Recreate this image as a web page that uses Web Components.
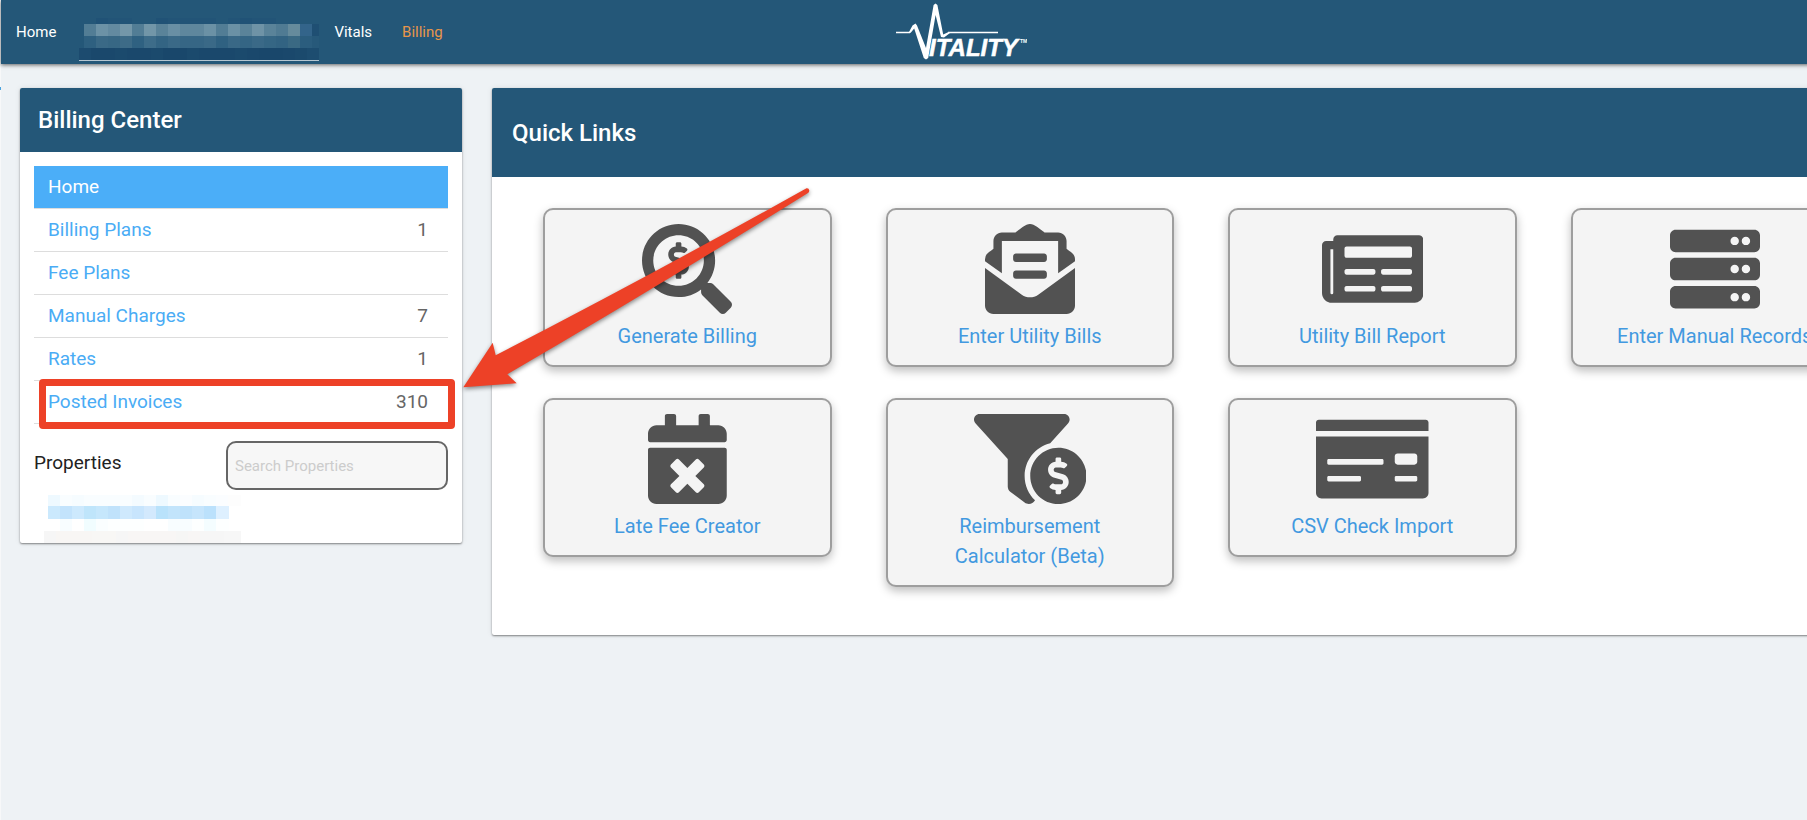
<!DOCTYPE html>
<html lang="en">
<head>
<meta charset="utf-8">
<title>Billing Center</title>
<style>
html, body {
  margin: 0;
  min-height: 100%;
}

body {
  background: #eef2f5;
  font-family: Roboto, "Liberation Sans", sans-serif;
  overflow-x: hidden;
}
</style>
</head>
<body>
<app-shell>
  <top-bar slot="header">
    <nav-link href="#home">Home</nav-link>
    <pixel-mask name="account"></pixel-mask>
    <nav-link href="#vitals">Vitals</nav-link>
    <nav-link href="#billing" active>Billing</nav-link>
  </top-bar>

  <panel-card slot="side" heading="Billing Center">
    <billing-menu>
      <menu-row href="#home" active>Home</menu-row>
      <menu-row href="#plans" count="1">Billing Plans</menu-row>
      <menu-row href="#fees">Fee Plans</menu-row>
      <menu-row href="#charges" count="7">Manual Charges</menu-row>
      <menu-row href="#rates" count="1">Rates</menu-row>
      <menu-row href="#invoices" count="310" marked>Posted Invoices</menu-row>
    </billing-menu>
    <property-search></property-search>
  </panel-card>

  <panel-card slot="main" heading="Quick Links" large>
    <link-grid>
      <quick-link href="#generate" icon="search-dollar">Generate Billing</quick-link>
      <quick-link href="#bills" icon="envelope">Enter Utility Bills</quick-link>
      <quick-link href="#report" icon="newspaper">Utility Bill Report</quick-link>
      <quick-link href="#records" icon="server">Enter Manual Records</quick-link>
      <quick-link href="#late-fee" icon="calendar">Late Fee Creator</quick-link>
      <quick-link href="#reimbursement" icon="funnel">Reimbursement Calculator (Beta)</quick-link>
      <quick-link href="#csv" icon="check">CSV Check Import</quick-link>
    </link-grid>
  </panel-card>

  <pointer-arrow slot="overlay"></pointer-arrow>
</app-shell>

<script>
// each icon is drawn on a 512 unit high box
const icons = {
  'search-dollar': {
    width: 512,
    path: 'M505.04 442.66l-99.71-99.69c-4.5-4.5-10.6-7-17-7h-16.3c27.6-35.3 44-79.69 44-127.99C416.03 93.09 322.92 0 208.02 0S0 93.09 0 207.98s93.11 207.98 208.02 207.98c48.3 0 92.71-16.4 128.01-44v16.3c0 6.4 2.5 12.5 7 17l99.71 99.69c9.4 9.4 24.6 9.4 33.9 0l28.3-28.3c9.4-9.4 9.4-24.59.1-33.99zm-297.02-90.7c-79.54 0-144-64.34-144-143.98 0-79.53 64.35-143.98 144-143.98 79.54 0 144 64.34 144 143.98 0 79.53-64.35 143.98-144 143.98zm27.11-152.54l-45.01-13.5c-5.16-1.55-8.77-6.78-8.77-12.73 0-7.27 5.3-13.19 11.8-13.19h28.11c4.56 0 8.96 1.29 12.82 3.72 3.24 2.03 7.36 1.91 10.13-.73l11.75-11.21c3.53-3.37 3.33-9.21-.57-12.14-9.1-6.83-20.08-10.77-31.37-11.35V112c0-4.42-3.58-8-8-8h-16c-4.42 0-8 3.58-8 8v16.12c-23.63.63-42.68 20.55-42.68 45.07 0 19.97 12.99 37.81 31.58 43.39l45.01 13.5c5.16 1.55 8.77 6.78 8.77 12.73 0 7.27-5.3 13.19-11.8 13.19h-28.1c-4.56 0-8.96-1.29-12.82-3.72-3.24-2.03-7.36-1.91-10.13.73l-11.75 11.21c-3.53 3.37-3.33 9.21.57 12.14 9.1 6.83 20.08 10.77 31.37 11.35V304c0 4.42 3.58 8 8 8h16c4.42 0 8-3.58 8-8v-16.12c23.63-.63 42.68-20.54 42.68-45.07 0-19.97-12.99-37.81-31.59-43.39z'
  },
  envelope: {
    width: 512,
    path: 'M176 216h160c8.84 0 16-7.16 16-16v-16c0-8.84-7.16-16-16-16H176c-8.84 0-16 7.16-16 16v16c0 8.84 7.16 16 16 16zm-16 80c0 8.84 7.16 16 16 16h160c8.84 0 16-7.16 16-16v-16c0-8.84-7.16-16-16-16H176c-8.84 0-16 7.16-16 16v16zm96 121.13c-16.42 0-32.84-5.06-46.86-15.19L0 250.86V464c0 26.51 21.49 48 48 48h416c26.51 0 48-21.49 48-48V250.86L302.86 401.94c-14.02 10.12-30.44 15.19-46.86 15.19zm237.61-254.18c-8.85-6.94-17.24-13.47-29.61-22.81V96c0-26.51-21.49-48-48-48h-77.55c-3.04-2.2-5.87-4.26-9.04-6.56C312.6 29.17 279.2-.35 256 0c-23.2-.35-56.59 29.17-73.41 41.44-3.17 2.3-6 4.36-9.04 6.56H96c-26.51 0-48 21.49-48 48v44.14c-12.37 9.33-20.76 15.87-29.61 22.81A47.995 47.995 0 0 0 0 200.72v10.65l96 69.35V96h320v184.72l96-69.35v-10.65c0-14.74-6.78-28.67-18.39-37.77z'
  },
  newspaper: {
    width: 576,
    path: 'M552 64H88c-13.255 0-24 10.745-24 24v8H24c-13.255 0-24 10.745-24 24v272c0 30.928 25.072 56 56 56h472c26.51 0 48-21.49 48-48V88c0-13.255-10.745-24-24-24zM56 400a8 8 0 0 1-8-8V144h16v248a8 8 0 0 1-8 8zm236-16H140c-6.627 0-12-5.373-12-12v-8c0-6.627 5.373-12 12-12h152c6.627 0 12 5.373 12 12v8c0 6.627-5.373 12-12 12zm208 0H348c-6.627 0-12-5.373-12-12v-8c0-6.627 5.373-12 12-12h152c6.627 0 12 5.373 12 12v8c0 6.627-5.373 12-12 12zm-208-96H140c-6.627 0-12-5.373-12-12v-8c0-6.627 5.373-12 12-12h152c6.627 0 12 5.373 12 12v8c0 6.627-5.373 12-12 12zm208 0H348c-6.627 0-12-5.373-12-12v-8c0-6.627 5.373-12 12-12h152c6.627 0 12 5.373 12 12v8c0 6.627-5.373 12-12 12zm0-96H140c-6.627 0-12-5.373-12-12v-40c0-6.627 5.373-12 12-12h360c6.627 0 12 5.373 12 12v40c0 6.627-5.373 12-12 12z'
  },
  server: {
    width: 512,
    path: [0, 160, 320].map(y => `M480 ${y + 160}H32c-17.673 0-32-14.327-32-32V${y + 64}c0-17.673 14.327-32 32-32h448c17.673 0 32 14.327 32 32v64c0 17.673-14.327 32-32 32zm-48-88c-13.255 0-24 10.745-24 24s10.745 24 24 24 24-10.745 24-24-10.745-24-24-24zm-64 0c-13.255 0-24 10.745-24 24s10.745 24 24 24 24-10.745 24-24-10.745-24-24-24z`).join('')
  },
  calendar: {
    width: 448,
    path: 'M436 160H12c-6.6 0-12-5.4-12-12v-36c0-26.5 21.5-48 48-48h48V12c0-6.6 5.4-12 12-12h40c6.6 0 12 5.4 12 12v52h128V12c0-6.6 5.4-12 12-12h40c6.6 0 12 5.4 12 12v52h48c26.5 0 48 21.5 48 48v36c0 6.6-5.4 12-12 12zM12 192h424c6.6 0 12 5.4 12 12v260c0 26.5-21.5 48-48 48H48c-26.5 0-48-21.5-48-48V204c0-6.6 5.4-12 12-12zm257.3 160l48.1-48.1c4.7-4.7 4.7-12.3 0-17l-28.3-28.3c-4.7-4.7-12.3-4.7-17 0L224 306.7l-48.1-48.1c-4.7-4.7-12.3-4.7-17 0l-28.3 28.3c-4.7 4.7-4.7 12.3 0 17l48.1 48.1-48.1 48.1c-4.7 4.7-4.7 12.3 0 17l28.3 28.3c4.7 4.7 12.3 4.7 17 0l48.1-48.1 48.1 48.1c4.7 4.7 12.3 4.7 17 0l28.3-28.3c4.7-4.7 4.7-12.3 0-17L269.3 352z'
  },
  funnel: {
    width: 640,
    path: 'M433.46 165.94l101.2-111.87C554.61 34.12 540.48 0 512.26 0H31.74C3.52 0-10.61 34.12 9.34 54.07L192 256v155.92c0 12.59 5.93 24.44 16 32l79.99 60c20.86 15.64 48.47 6.97 59.22-13.57C310.8 455.38 288 406.35 288 352c0-89.79 62.05-165.17 145.46-186.06zM480 192c-88.37 0-160 71.63-160 160s71.63 160 160 160 160-71.63 160-160-71.63-160-160-160zm16 239.88V448c0 4.42-3.58 8-8 8h-16c-4.42 0-8-3.58-8-8v-16.29c-11.29-.58-22.27-4.52-31.37-11.35-3.9-2.93-4.1-8.77-.57-12.14l11.75-11.21c2.77-2.64 6.89-2.76 10.13-.73 3.87 2.42 8.26 3.72 12.82 3.72h28.11c6.5 0 11.8-5.92 11.8-13.19 0-5.95-3.61-11.19-8.77-12.73l-45.01-13.5c-18.59-5.58-31.58-23.42-31.58-43.39 0-24.52 19.05-44.44 42.67-45.07V256c0-4.42 3.58-8 8-8h16c4.42 0 8 3.58 8 8v16.29c11.29.58 22.27 4.51 31.37 11.35 3.9 2.93 4.1 8.77.57 12.14l-11.75 11.21c-2.77 2.64-6.89 2.76-10.13.73-3.87-2.43-8.26-3.72-12.82-3.72h-28.11c-6.5 0-11.8 5.92-11.8 13.19 0 5.95 3.61 11.19 8.77 12.73l45.01 13.5c18.59 5.58 31.58 23.42 31.58 43.39 0 24.53-19.05 44.44-42.67 45.07z'
  },
  check: {
    width: 640,
    path: 'M624 32H16C7.16 32 0 39.16 0 48v48h640V48c0-8.84-7.16-16-16-16zM0 448c0 17.67 14.33 32 32 32h576c17.67 0 32-14.33 32-32V128H0v320zm448-208c0-8.84 7.16-16 16-16h96c8.84 0 16 7.16 16 16v32c0 8.84-7.16 16-16 16h-96c-8.84 0-16-7.16-16-16v-32zm0 120c0-4.42 3.58-8 8-8h112c4.42 0 8 3.58 8 8v16c0 4.42-3.58 8-8 8H456c-4.42 0-8-3.58-8-8v-16zM64 264c0-4.42 3.58-8 8-8h304c4.42 0 8 3.58 8 8v16c0 4.42-3.58 8-8 8H72c-4.42 0-8-3.58-8-8v-16zm0 96c0-4.42 3.58-8 8-8h176c4.42 0 8 3.58 8 8v16c0 4.42-3.58 8-8 8H72c-4.42 0-8-3.58-8-8v-16z'
  }
}

// rows of 12px wide blocks that hide private names
const masks = {
  account: {
    width: 240,
    height: 42,
    rows: [
      { x: 17, y: 0, h: 6, colors: '205276 225477 225477 245778 245778 205276 225477 225477 225477 225477 245778 225477 205276 225477 225477 245778' },
      { x: 5, y: 6, h: 12, colors: '527d95 6c92a6 638aa0 7497a9 527d95 7296a8 5a8399 698fa4 5f879d 5f879d 6b91a5 527d95 6b91a5 5a8399 6f93a6 5a8399 507b93 668b9c 33648a 1f4f73' },
      { x: 5, y: 18, h: 12, colors: '2e6080 3a6986 376784 3d6b87 2f6181 3d6c89 336483 3a6987 366685 366685 3a6987 2f6181 396886 346584 3a6987 356684 326382 3a6983 2b5d7e 27597a' },
      { x: 0, y: 30, h: 12, colors: '1c4b6f 1a486c 1a486c 1b4a6d 1a486c 1a486c 1b4a6d 19476b 19476b 1b4a6d 1a486c 1a486c 1a486c 1b4a6d 1a486c 19476b 19476b 1a486c 1b4a6d 1d4d70' }
    ]
  },
  property: {
    width: 197,
    height: 48,
    rows: [
      { x: 4, y: 0, h: 11, colors: 'eef9ff f9fdff f6fcff f9fdff f9fdff f9fdff f9fdff f4fbff f9fdff eef9ff f9fdff fbfdff f6fcff f9fdff fbfdff fdfdfd' },
      { x: 4, y: 11, h: 13, colors: 'cbe9fd c3e3fc cde9fd bfe5fb c6e7fc c0e2fb cfe9fd c8e5fd d3e9fd b9e2fb c2e4fb bfe2fb c6e5fc bbe1fc def0ff' },
      { x: 16, y: 24, h: 12, colors: 'f8fdff ffffff f1fdff fafeff fdffff fdffff fdffff ffffff ffffff f8fdff f8fdff fdffff f4fdff fdffff' },
      { x: 0, y: 36, h: 12, colors: 'f6f6f6 f8f6f4 f8f6f4 f8f6f4 f8f7f5 f8f7f5 f6f6f6 f8f6f5 f8f6f5 f8f6f5 f8f6f5 f6f6f5 f8f6f5 f6f6f6 f6f6f6 f7f7f7 f7f7f7' }
    ]
  }
}

class AppShell extends HTMLElement {
  constructor () {
    super()
    this.attachShadow({ mode: 'open' })
    this.shadowRoot.innerHTML = /* HTML */
    `
    <style>
    :host {
      display: block;
      position: relative;
      min-width: 1920px;
      min-height: 100vh;
      box-sizing: border-box;
      border-left: 1px solid #f7f8f9;
    }

    .columns {
      display: grid;
      grid-template-columns: 442px 1fr;
      align-items: start;
      gap: 30px;
      padding: 24px 10px 24px 19px;
    }

    .edge-mark {
      position: absolute;
      left: -1px;
      top: 87px;
      width: 1px;
      height: 3px;
      background: #4aa3df;
    }
    </style>
    <slot name="header"></slot>
    <div class="columns">
      <slot name="side"></slot>
      <slot name="main"></slot>
    </div>
    <div class="edge-mark"></div>
    <slot name="overlay"></slot>
    `
  }
}

class TopBar extends HTMLElement {
  constructor () {
    super()
    this.attachShadow({ mode: 'open' })
    this.shadowRoot.innerHTML = /* HTML */
    `
    <style>
    :host {
      display: block;
      background: #245778;
      box-shadow: 0 1px 4px rgba(0, 0, 0, .6);
    }

    header {
      display: grid;
      grid-template-columns: 1fr auto 1fr;
      align-items: center;
      height: 64px;
    }

    nav {
      display: flex;
      align-items: center;
    }

    svg {
      display: block;
    }
    </style>
    <header>
      <nav><slot></slot></nav>
      <svg width="132" height="64" viewBox="35 0 132 64" role="img" aria-label="Vitality">
        <path d="M36 32.5H50M88 32.5H138" fill="none" stroke="#fff" stroke-width="1.4"/>
        <path d="M49 32L52.5 25.5L55.5 23.5L57 25.5L66 48L73.6 5L75.5 3.5L77.4 5L83.2 34.5L88.5 32L90 33L84 37.5L81 37L75.6 15L68.2 58L66 59.5L63.8 58L54.2 28.5L50.5 33Z" fill="#fff"/>
        <text x="69" y="56" fill="#fff" font-family="'Liberation Sans', Arial, sans-serif" font-size="24" font-weight="700" font-style="italic" stroke="#fff" stroke-width=".5">ITALITY</text>
        <text x="160" y="43" fill="#fff" font-family="'Liberation Sans', Arial, sans-serif" font-size="5" font-weight="700">TM</text>
      </svg>
    </header>
    `
  }
}

class NavLink extends HTMLElement {
  connectedCallback () {
    this.attachShadow({ mode: 'open' })
    this.shadowRoot.innerHTML = /* HTML */
    `
    <style>
    :host {
      display: block;
      font-size: 15px;
      line-height: 20px;
    }

    a {
      display: block;
      padding: 0 15px;
      color: #fff;
      text-decoration: none;
    }

    :host([active]) a {
      color: #e8964a;
    }
    </style>
    <a href="${this.getAttribute('href')}"><slot></slot></a>
    `
  }
}

class PixelMask extends HTMLElement {
  connectedCallback () {
    const mask = masks[this.getAttribute('name')]
    const blocks = mask.rows.map(row => row.colors.split(' ').map((color, i) => {
      const x = row.x + i * 12
      const width = Math.min(13, mask.width - x)
      return width > 0 ? `<rect x="${x}" y="${row.y}" width="${width}" height="${row.h}" fill="#${color}"/>` : ''
    }).join('')).join('')

    this.attachShadow({ mode: 'open' })
    this.shadowRoot.innerHTML = /* HTML */
    `
    <style>
    :host {
      display: block;
    }

    :host([name=account]) {
      margin: 14px 0 0 8px;
      border-bottom: 1px solid #b5c6d1;
    }

    svg {
      display: block;
    }
    </style>
    <svg width="${mask.width}" height="${mask.height}" shape-rendering="crispEdges" aria-hidden="true">${blocks}</svg>
    `
  }
}

class PanelCard extends HTMLElement {
  connectedCallback () {
    this.attachShadow({ mode: 'open' })
    this.shadowRoot.innerHTML = /* HTML */
    `
    <style>
    :host {
      display: block;
      background: #fff;
      border-radius: 2px;
      box-shadow: 0 1px 2px rgba(0, 0, 0, .45), 0 0 6px rgba(0, 0, 0, .08);
    }

    h2 {
      margin: 0;
      padding: 16px 18px;
      border-radius: 2px 2px 0 0;
      background: #245778;
      color: #fff;
      font-size: 24px;
      font-weight: 500;
      line-height: 32px;
    }

    :host([large]) h2 {
      padding: 29px 20px 28px;
    }
    </style>
    <h2>${this.getAttribute('heading')}</h2>
    <slot></slot>
    `
  }
}

class BillingMenu extends HTMLElement {
  constructor () {
    super()
    this.attachShadow({ mode: 'open' })
    this.shadowRoot.innerHTML = /* HTML */
    `
    <style>
    :host {
      display: block;
      padding: 14px 14px 17px;
    }
    </style>
    <nav aria-label="Billing"><slot></slot></nav>
    `
  }
}

class MenuRow extends HTMLElement {
  connectedCallback () {
    const count = this.getAttribute('count') || ''
    this.attachShadow({ mode: 'open' })
    this.shadowRoot.innerHTML = /* HTML */
    `
    <style>
    :host {
      display: block;
      position: relative;
      border-bottom: 1px solid #ddd;
      font-size: 19px;
      line-height: 24px;
    }

    a {
      display: flex;
      justify-content: space-between;
      padding: 9px 20px 9px 14px;
      color: #4aacf5;
      text-decoration: none;
    }

    .count {
      color: #666;
    }

    :host([active]) a {
      background: #4baef8;
      color: #fff;
    }

    :host([marked])::after {
      content: '';
      position: absolute;
      inset: -2px -7px -6px 5px;
      border: 7px solid #ed4127;
      border-radius: 4px;
      pointer-events: none;
    }
    </style>
    <a href="${this.getAttribute('href')}"><slot></slot><span class="count">${count}</span></a>
    `
  }
}

class PropertySearch extends HTMLElement {
  constructor () {
    super()
    this.attachShadow({ mode: 'open' })
    this.shadowRoot.innerHTML = /* HTML */
    `
    <style>
    :host {
      display: block;
      padding: 0 14px;
      color: #222;
      font-size: 19px;
    }

    .search {
      display: flex;
      justify-content: space-between;
      line-height: 44px;
    }

    input {
      box-sizing: border-box;
      width: 222px;
      height: 49px;
      padding: 0 7px;
      border: 2px solid #666;
      border-radius: 10px;
      background: #f7f7f7;
      font: 15px Roboto, "Liberation Sans", sans-serif;
    }

    input::placeholder {
      color: #ccc;
      opacity: 1;
    }

    .results {
      padding: 5px 0 0 10px;
    }
    </style>
    <div class="search">
      <label for="search">Properties</label>
      <input id="search" type="text" placeholder="Search Properties">
    </div>
    <div class="results"><pixel-mask name="property"></pixel-mask></div>
    `
  }
}

class LinkGrid extends HTMLElement {
  constructor () {
    super()
    this.attachShadow({ mode: 'open' })
    this.shadowRoot.innerHTML = /* HTML */
    `
    <style>
    :host {
      display: grid;
      grid-template-columns: repeat(4, 1fr);
      align-items: start;
      gap: 31px 54px;
      padding: 31px 51px 48px;
    }
    </style>
    <slot></slot>
    `
  }
}

class QuickLink extends HTMLElement {
  connectedCallback () {
    const icon = icons[this.getAttribute('icon')]
    this.attachShadow({ mode: 'open' })
    this.shadowRoot.innerHTML = /* HTML */
    `
    <style>
    :host {
      display: block;
      font-size: 20px;
      line-height: 30px;
    }

    a {
      display: flex;
      flex-direction: column;
      align-items: center;
      gap: 7px;
      padding: 14px 40px;
      border: 2px solid #9e9e9e;
      border-radius: 10px;
      background: #f4f4f4;
      box-shadow: 0 4px 10px rgba(0, 0, 0, .26);
      color: #4299e0;
      text-align: center;
      text-decoration: none;
    }

    svg {
      display: block;
      height: 90px;
      fill: #525252;
    }
    </style>
    <a href="${this.getAttribute('href')}">
      <svg viewBox="0 0 ${icon.width} 512" aria-hidden="true"><path fill-rule="evenodd" d="${icon.path}"/></svg>
      <span><slot></slot></span>
    </a>
    `
  }
}

class PointerArrow extends HTMLElement {
  constructor () {
    super()
    this.attachShadow({ mode: 'open' })
    this.shadowRoot.innerHTML = /* HTML */
    `
    <style>
    :host {
      position: absolute;
      left: 459px;
      top: 180px;
      pointer-events: none;
    }

    svg {
      display: block;
      filter: drop-shadow(0 2px 2px rgba(0, 0, 0, .45));
    }
    </style>
    <svg width="360" height="220" viewBox="460 180 360 220" aria-hidden="true">
      <path fill="#ed4127" d="M463.3 387.3L492.7 342.7L495.7 355.3Q655 273 806.5 188.3Q809 188 809.3 190.5Q809.3 192 808 193Q657 287 507.3 374.3L516.7 383.3Z"/>
    </svg>
    `
  }
}

window.customElements.define('app-shell', AppShell)
window.customElements.define('top-bar', TopBar)
window.customElements.define('nav-link', NavLink)
window.customElements.define('pixel-mask', PixelMask)
window.customElements.define('panel-card', PanelCard)
window.customElements.define('billing-menu', BillingMenu)
window.customElements.define('menu-row', MenuRow)
window.customElements.define('property-search', PropertySearch)
window.customElements.define('link-grid', LinkGrid)
window.customElements.define('quick-link', QuickLink)
window.customElements.define('pointer-arrow', PointerArrow)
</script>
</body>
</html>
